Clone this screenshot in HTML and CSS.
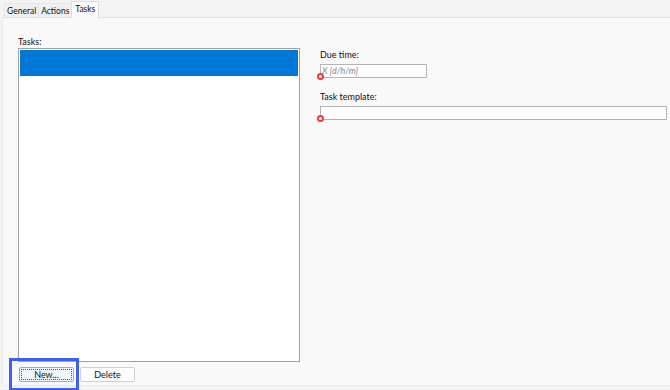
FILE: index.html
```html
<!DOCTYPE html>
<html>
<head>
<meta charset="utf-8">
<link rel="stylesheet" href="styles.css">
</head>
<body>
<div class="window">
  <div class="tabs">
    <div class="tab">General</div>
    <div class="tab">Actions</div>
    <div class="tab active">Tasks</div>
  </div>
  <div class="panel">
    <div class="left">
      <div class="label">Tasks:</div>
      <div class="listbox">
        <div class="row selected"></div>
      </div>
      <div class="buttons">
        <div class="btn-wrap">
          <button class="btn focused">New...</button>
          <div class="highlight"></div>
        </div>
        <button class="btn">Delete</button>
      </div>
    </div>
    <div class="right">
      <div class="field">
        <div class="label">Due time:</div>
        <div class="input-wrap">
          <div class="input short"><span class="placeholder">X [d/h/m]</span></div>
          <span class="err"></span>
        </div>
      </div>
      <div class="field">
        <div class="label">Task template:</div>
        <div class="input-wrap">
          <div class="input long"></div>
          <span class="err"></span>
        </div>
      </div>
    </div>
  </div>
</div>
</body>
</html>
```
FILE: styles.css
```css
html, body {
  margin: 0;
  padding: 0;
  width: 670px;
  height: 390px;
  overflow: hidden;
  background: #f0f0f0;
  font-family: Lato, "Open Sans", sans-serif;
  font-size: 9px;
  color: #000;
}
.window {
  display: flex;
  flex-direction: column;
  height: 390px;
  background: #f3f3f3;
}
.tabs {
  display: flex;
  padding: 0 0 0 2px;
  height: 17px;
  align-items: flex-end;
}
.tab {
  height: 14px;
  line-height: 14px;
  padding: 0 2px;
  font-size: 8.5px;
  border: 1px solid #e6e6e6;
  border-bottom: none;
  background: #f0f0f0;
  margin-right: -1px;
  box-sizing: border-box;
  color: #111;
}
.tab:first-child { margin-left: 2px; }
.tab.active {
  height: 17px;
  line-height: 15px;
  background: #f9f9f9;
  border-color: #dcdcdc;
  position: relative;
  top: 1px;
  padding: 0 3px;
}
.panel {
  margin-left: 2px;
  height: 369px;
  background: #f9f9f9;
  border-top: 1px solid #e3e3e3;
  border-left: 1px solid #ececec;
  border-bottom: 1px solid #ececec;
  display: flex;
  box-sizing: border-box;
  padding: 18px 0 0 15px;
}
.left {
  width: 282px;
  display: flex;
  flex-direction: column;
}
.label {
  height: 12px;
  line-height: 12px;
  color: #111;
}
.listbox {
  height: 314px;
  border: 1px solid #a2a2a8;
  background: #fff;
  box-sizing: border-box;
  padding: 1px;
}
.row.selected {
  height: 26px;
  background: #0078d7;
}
.buttons {
  display: flex;
  gap: 6px;
  margin-top: 5px;
  padding-left: 1px;
}
.btn-wrap {
  position: relative;
}
.btn {
  width: 55px;
  height: 15px;
  padding: 0;
  font-family: inherit;
  font-size: 9px;
  line-height: 12px;
  background: #fdfdfd;
  border: 1px solid #d0d0d0;
  border-radius: 2px;
  color: #111;
}
.btn.focused {
  background: #eef5fc;
  border: 1px solid #7eb4ea;
  outline: 1px dotted #555;
  outline-offset: -3px;
}
.highlight {
  position: absolute;
  left: -10px;
  top: -9px;
  width: 70px;
  height: 33px;
  border: 3px solid #3f5ff2;
  box-sizing: border-box;
}
.right {
  margin-left: 20px;
  display: flex;
  flex-direction: column;
  padding-top: 13px;
  gap: 13px;
}
.right .label { margin-bottom: 3px; }
.input-wrap {
  position: relative;
}
.input {
  height: 14px;
  background: #fff;
  border: 1px solid #b4b4b4;
  box-sizing: border-box;
}
.input.short { width: 107px; }
.input.long { width: 347px; }
.placeholder {
  font-style: italic;
  color: #8a8a8a;
  line-height: 12px;
  padding-left: 1px;
  font-size: 9px;
}
.err {
  position: absolute;
  left: -3px;
  top: 9px;
  width: 3px;
  height: 3px;
  border: 2px solid #ec3b40;
  border-radius: 50%;
  background: #fff;
}
```
